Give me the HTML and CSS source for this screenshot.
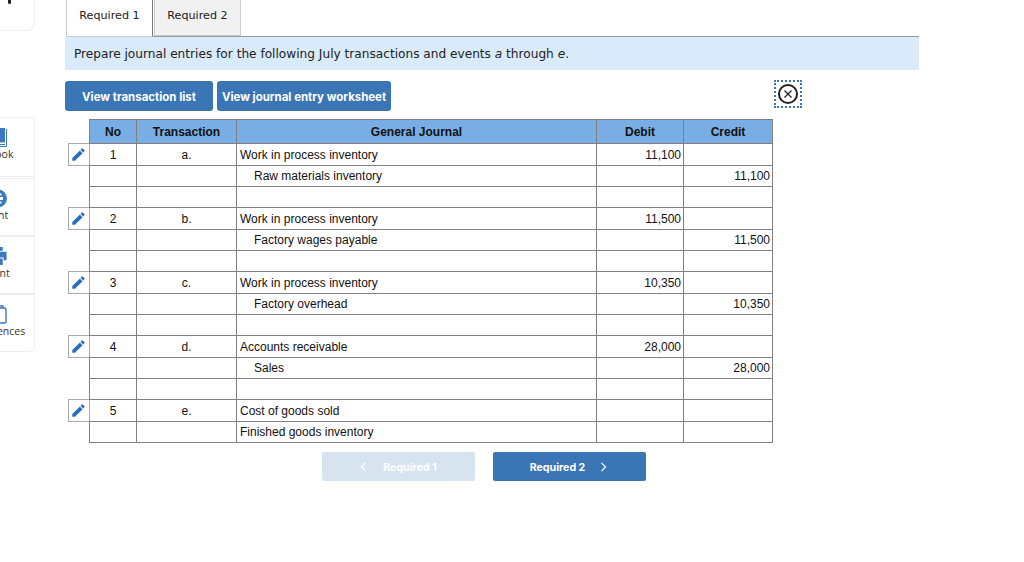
FILE: index.html
```html
<!DOCTYPE html>
<html lang="en">

<head>
  <meta charset="UTF-8">
  <meta name="viewport" content="width=device-width, initial-scale=1.0">
  <title>Journal entries</title>

  <link rel="stylesheet" href="styles.css">
</head>

<body>
  <div class="page">
    <aside class="sidebar">
      <div class="side-card side-top">
        <span class="top-mark"></span>
      </div>

      <div class="side-group">
        <a class="side-card side-first">
          <svg class="side-icon" viewBox="0 0 18 19">
            <path fill="#3a78bf" d="M0 0h16v14.5H0z" />
            <path fill="none" stroke="#3a78bf" stroke-width="1" d="M17.5 1v17.5H0M0 16.5h16" />
          </svg>
          <span>eBook</span>
        </a>
        <a class="side-card">
          <svg class="side-icon" viewBox="0 0 18 18">
            <circle cx="9" cy="9" r="9" fill="#3a78bf" />
            <path fill="#fff" d="M5 7.5h9v3H5zM8 4h1.5v10H8zM11 4h1.5v2H11zM11 12h1.5v2H11z" />
          </svg>
          <span>Hint</span>
        </a>
        <a class="side-card">
          <svg class="side-icon" viewBox="0 0 18 20">
            <path fill="#3a78bf" d="M4 0h10v4H4zM0 5h18v9h-3v-3H3v3H0zM5 12h9v7H5z" />
          </svg>
          <span>Print</span>
        </a>
        <a class="side-card">
          <svg class="side-icon" viewBox="0 0 18 19">
            <rect x="1" y="3" width="16" height="15" rx="2" fill="none" stroke="#3a78bf" stroke-width="1.4" />
            <path fill="none" stroke="#3a78bf" stroke-width="1.4" d="M5 3V1h9v2" />
          </svg>
          <span>References</span>
        </a>
      </div>
    </aside>

    <main class="content">
      <nav class="tabs">
        <a class="tab tab-active">Required 1</a>
        <a class="tab">Required 2</a>
      </nav>

      <p class="notice">Prepare journal entries for the following July transactions and events <em>a</em> through <em>e</em>.</p>

      <div class="toolbar">
        <button class="btn btn-list">View transaction list</button>
        <button class="btn btn-worksheet">View journal entry worksheet</button>
        <button class="close-btn" aria-label="Close">
          <svg viewBox="0 0 22 22" width="22" height="22">
            <circle cx="11" cy="11" r="9" fill="none" stroke="#222" stroke-width="2" />
            <path fill="none" stroke="#222" stroke-width="1.3" d="M7.5 7.5l7 7M14.5 7.5l-7 7" />
          </svg>
        </button>
      </div>

      <table class="journal">
        <colgroup>
          <col class="col-edit">
          <col class="col-no">
          <col class="col-trans">
          <col class="col-journal">
          <col class="col-debit">
          <col class="col-credit">
        </colgroup>
        <thead>
          <tr>
            <td class="blank"></td>
            <th>No</th>
            <th>Transaction</th>
            <th>General Journal</th>
            <th>Debit</th>
            <th>Credit</th>
          </tr>
        </thead>
        <tbody id="journal-rows"></tbody>
      </table>

      <div class="pager">
        <button class="pager-btn pager-off">
          <svg class="chevron" viewBox="0 0 7 12"><path d="M6 1L1 6l5 5" /></svg>
          <span>Required 1</span>
        </button>
        <button class="pager-btn pager-next">
          <span>Required 2</span>
          <svg class="chevron" viewBox="0 0 7 12"><path d="M1 1l5 5-5 5" /></svg>
        </button>
      </div>
    </main>
  </div>

  <script>
    const entries = [
      { no: 1, tr: 'a.', debitName: 'Work in process inventory', creditName: 'Raw materials inventory', amount: '11,100' },
      { no: 2, tr: 'b.', debitName: 'Work in process inventory', creditName: 'Factory wages payable', amount: '11,500' },
      { no: 3, tr: 'c.', debitName: 'Work in process inventory', creditName: 'Factory overhead', amount: '10,350' },
      { no: 4, tr: 'd.', debitName: 'Accounts receivable', creditName: 'Sales', amount: '28,000' }
    ];

    const pencil = `<svg class="pencil" viewBox="0 0 24 24"><path d="M2 17.6V22h4.4L18.6 9.8l-4.4-4.4zM21.6 6.8a1.2 1.2 0 0 0 0-1.7l-2.7-2.7a1.2 1.2 0 0 0-1.7 0l-2 2 4.4 4.4z"/></svg>`;

    let rows = '';
    entries.forEach(e => {
      rows += `<tr class="entry-row"><td class="edit">${pencil}</td><td class="mid">${e.no}</td><td class="mid">${e.tr}</td><td>${e.debitName}</td><td class="num">${e.amount}</td><td></td></tr>`;
      rows += `<tr><td class="blank"></td><td></td><td></td><td class="indent">${e.creditName}</td><td></td><td class="num">${e.amount}</td></tr>`;
      rows += `<tr><td class="blank"></td><td></td><td></td><td></td><td></td><td></td></tr>`;
    });
    rows += `<tr class="entry-row"><td class="edit">${pencil}</td><td class="mid">5</td><td class="mid">e.</td><td>Cost of goods sold</td><td></td><td></td></tr>`;
    rows += `<tr><td class="blank"></td><td></td><td></td><td>Finished goods inventory</td><td></td><td></td></tr>`;
    document.querySelector('#journal-rows').innerHTML = rows;
  </script>
</body>

</html>
```

FILE: styles.css
```css
html,
body {
  background: #fff;
  height: 100%;
  margin: 0;
  overflow: hidden;
}

.page {
  display: flex;
  margin-left: -39px;
}

/* sidebar, cut off by the left edge of the window */
.sidebar {
  flex: none;
  width: 74px;
}

.side-card {
  align-items: center;
  border: 1px solid #eee;
  box-sizing: border-box;
  color: #333;
  display: flex;
  flex-direction: column;
  font-family: "Open Sans", sans-serif;
  font-size: 10.5px;
  height: 58px;
  padding-top: 10px;
  width: 74px;
}

.side-first {
  height: 60px;
  margin-bottom: 1px;
}

.side-top {
  border-radius: 0 0 8px 0;
  border-top: 0;
  height: 31px;
  padding-top: 0;
  position: relative;
}

.top-mark {
  background: #222;
  border-radius: 0 0 2px 2px;
  height: 4px;
  left: 46px;
  position: absolute;
  top: 0;
  width: 3px;
}

.side-group {
  margin-top: 86px;
}

.side-group .side-card:last-child {
  border-radius: 0 0 6px 0;
}

.side-icon {
  height: 19px;
  width: 18px;
}

.content {
  flex: none;
  margin-left: 30px;
  width: 854px;
}

.tabs {
  border-bottom: 1px solid #999;
  display: flex;
  height: 36px;
  margin-left: 1px;
}

.tab {
  background: #f1f1f1;
  border: 1px solid #ccc;
  border-top: 0;
  box-sizing: border-box;
  color: #222;
  font-family: "DejaVu Sans", sans-serif;
  font-size: 11.2px;
  height: 36px;
  line-height: 31px;
  margin-left: 1px;
  text-align: center;
  width: 87px;
}

.tab-active {
  background: #fff;
  border-left: 1px solid #ccc;
  border-right: 1px solid #777;
  height: 37px;
  margin-left: 0;
}

.notice {
  background: #d9eafa;
  box-sizing: border-box;
  color: #222;
  font-family: "DejaVu Sans", sans-serif;
  font-size: 12.15px;
  height: 33px;
  line-height: 31px;
  margin: 0;
  padding: 2px 0 0 9px;
}

.toolbar {
  align-items: flex-start;
  display: flex;
  gap: 4px;
  height: 30px;
  margin-top: 11px;
  width: 737px;
}

.btn {
  background: #3a75b6;
  border: 0;
  border-radius: 3px;
  color: #fff;
  font-family: Inter, sans-serif;
  font-size: 11.45px;
  font-weight: 700;
  height: 30px;
  padding: 1px 0 0;
}

.btn-list {
  width: 148px;
}

.btn-worksheet {
  width: 174px;
}

.close-btn {
  background: none;
  border: 2px dotted #3a75b6;
  box-sizing: border-box;
  display: flex;
  height: 28px;
  margin-left: auto;
  margin-top: -1px;
  padding: 1px;
  width: 28px;
}

.journal {
  border-collapse: collapse;
  color: #111;
  font-family: "Liberation Sans", sans-serif;
  font-size: 12px;
  margin: 8px 0 0 3px;
  table-layout: fixed;
  width: 704px;
}

.col-edit {
  width: 21px;
}

.col-no {
  width: 47px;
}

.col-trans {
  width: 100px;
}

.col-journal {
  width: 360px;
}

.col-debit {
  width: 87px;
}

.col-credit {
  width: 89px;
}

.journal th,
.journal td {
  border: 1px solid #808080;
  box-sizing: border-box;
  height: 21px;
  padding: 0 3px;
}

.journal th {
  background: #78aee3;
  font-weight: 700;
  height: 24px;
  padding: 0;
}

.journal .blank {
  border: 0;
}

.journal .edit {
  border-color: #aaa;
  padding: 0 0 0 2px;
}

.entry-row td {
  height: 22px;
}

.mid {
  text-align: center;
}

.journal .num {
  padding-right: 2px;
  text-align: right;
}

.journal .indent {
  padding-left: 17px;
}

.pencil {
  display: block;
  fill: #2f71b5;
  height: 15px;
  width: 15px;
}

.pager {
  display: flex;
  gap: 18px;
  margin-top: 9px;
  padding-left: 257px;
}

.pager-btn {
  align-items: center;
  background: #3a75b6;
  border: 0;
  border-radius: 2px;
  color: #fff;
  display: flex;
  font-family: Inter, sans-serif;
  font-size: 10.6px;
  font-weight: 700;
  gap: 15px;
  height: 29px;
  justify-content: center;
  padding: 1px 0 0;
  width: 153px;
}

.pager-next {
  padding-right: 2px;
}

.pager-off {
  background: #d8e3f0;
  gap: 16px;
}

.chevron {
  fill: none;
  height: 10px;
  stroke: #fff;
  stroke-width: 1.4;
  width: 7px;
}
```
